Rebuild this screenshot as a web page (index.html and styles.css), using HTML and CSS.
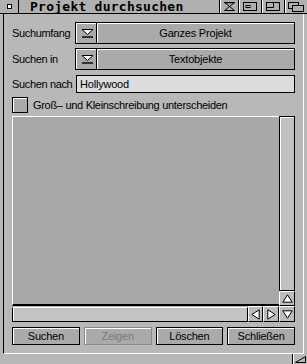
FILE: index.html
```html
<!DOCTYPE html>
<html>
<head>
<meta charset="utf-8">
<link rel="stylesheet" href="styles.css">
</head>
<body>
<div class="window">
  <div class="titlebar">
    <div class="tgad close"><span class="closebox"></span></div>
    <div class="title">Projekt durchsuchen</div>
    <div class="tgad g1"><svg width="11" height="9" viewBox="0 0 11 9"><path d="M0.5 0.5H10.5L5.5 4.5L10.5 8.5H0.5L5.5 4.5Z" fill="none" stroke="#000"/><path d="M0.5 0.5H10.5" stroke="#000" stroke-width="1.6"/></svg></div>
    <div class="tgad g2"><svg width="14" height="9" viewBox="0 0 14 9"><rect x="0.5" y="0.5" width="13" height="8" fill="none" stroke="#000"/><rect x="3" y="3.5" width="4" height="2" fill="none" stroke="#000"/></svg></div>
    <div class="tgad g3"><svg width="14" height="9" viewBox="0 0 14 9"><rect x="0.5" y="0.5" width="13" height="8" fill="none" stroke="#000"/><path d="M0.5 5.5H7.5V0.5" fill="none" stroke="#000"/></svg></div>
    <div class="tgad g4"><svg width="16" height="10" viewBox="0 0 16 10"><rect x="0.5" y="0.5" width="10" height="6" fill="#b0b0b0" stroke="#000"/><rect x="4.5" y="3.5" width="11" height="6" fill="#b0b0b0" stroke="#000"/></svg></div>
  </div>
  <div class="frame">
    <div class="row r1">
      <span class="label">Suchumfang</span>
      <div class="cycle"><span class="cyc-icon"><svg width="13" height="10" viewBox="0 0 13 10"><path d="M1 1.5H12L6.5 6.5Z" fill="#fff" stroke="#000"/><path d="M1 9H12" stroke="#000" stroke-width="1.4"/></svg></span><span class="cyc-text">Ganzes Projekt</span></div>
    </div>
    <div class="row r2">
      <span class="label">Suchen in</span>
      <div class="cycle"><span class="cyc-icon"><svg width="13" height="10" viewBox="0 0 13 10"><path d="M1 1.5H12L6.5 6.5Z" fill="#fff" stroke="#000"/><path d="M1 9H12" stroke="#000" stroke-width="1.4"/></svg></span><span class="cyc-text">Textobjekte</span></div>
    </div>
    <div class="row r3">
      <span class="label">Suchen nach</span>
      <div class="string">Hollywood</div>
    </div>
    <div class="row r4">
      <span class="checkbox"></span>
      <span class="cblabel">Groß– und Kleinschreibung unterscheiden</span>
    </div>
    <div class="listgrid">
      <div class="list"></div>
      <div class="vscroll"></div>
      <div class="arrow up"><svg width="11" height="9" viewBox="0 0 11 9"><path d="M5.5 0.8L10.2 8.2H0.8Z" fill="#fff" stroke="#000"/></svg></div>
      <div class="hrow">
        <div class="hscroll"></div>
        <div class="arrow lr"><svg width="9" height="11" viewBox="0 0 9 11"><path d="M0.8 5.5L8.2 0.8V10.2Z" fill="#fff" stroke="#000"/></svg></div>
        <div class="arrow lr"><svg width="9" height="11" viewBox="0 0 9 11"><path d="M8.2 5.5L0.8 0.8V10.2Z" fill="#fff" stroke="#000"/></svg></div>
      </div>
      <div class="arrow down"><svg width="11" height="9" viewBox="0 0 11 9"><path d="M5.5 8.2L10.2 0.8H0.8Z" fill="#fff" stroke="#000"/></svg></div>
    </div>
    <div class="buttons">
      <div class="btn">Suchen</div>
      <div class="btn disabled">Zeigen</div>
      <div class="btn">Löschen</div>
      <div class="btn">Schließen</div>
    </div>
  </div>
  <div class="bottombar">
    <div class="sizegad"><svg width="11" height="7" viewBox="0 0 11 7"><path d="M0.5 6.5L10.5 0.5V6.5Z" fill="none" stroke="#000"/></svg></div>
  </div>
</div>
</body>
</html>
```
FILE: styles.css
```css
* { box-sizing: border-box; }
body {
  margin: 0;
  background: #b8b8b8;
  font-family: "Liberation Sans", Arial, sans-serif;
  font-size: 11px;
  color: #000;
}
.window {
  width: 307px;
  height: 364px;
  display: flex;
  flex-direction: column;
  background: #b8b8b8;
  overflow: hidden;
}
.titlebar {
  height: 14px;
  flex: none;
  display: flex;
  border-bottom: 1px solid #000;
  background: #b0b0b0;
}
.tgad {
  height: 13px;
  display: flex;
  align-items: center;
  justify-content: center;
  border-left: 1px solid #000;
  box-shadow: inset 1px 0 #fff;
}
.close {
  width: 19px;
  border-left: 0;
  border-right: 1px solid #000;
  box-shadow: none;
}
.closebox {
  width: 5px;
  height: 5px;
  border: 1px solid #000;
  background: #fff;
}
.title {
  flex: 1;
  padding-left: 11px;
  font-family: "DejaVu Sans Mono", "Liberation Mono", monospace;
  font-weight: bold;
  font-size: 13px;
  line-height: 13px;
  letter-spacing: 0.25px;
  white-space: nowrap;
}
.g1 { width: 19px; }
.g2, .g3, .g4 { width: 23px; }

.frame {
  flex: 1;
  display: flex;
  flex-direction: column;
  margin: 0 3px;
  border-left: 1px solid #000;
  border-right: 1px solid #fff;
  border-bottom: 1px solid #fff;
  padding: 8px 8px 8px 8px;
}
.row {
  display: flex;
  align-items: center;
  flex: none;
}
.r1 { height: 22px; margin-bottom: 4px; }
.r2 { height: 22px; margin-bottom: 5px; }
.r3 { height: 18px; margin-bottom: 4px; }
.r4 { height: 16px; margin-bottom: 3px; }
.label {
  width: 63px;
  letter-spacing: -0.35px;
  white-space: nowrap;
}
.cycle {
  flex: 1;
  height: 100%;
  display: flex;
  align-items: center;
  background: #aaaaaa;
  border: 1px solid #000;
  box-shadow: inset 1px 1px 0 #fff;
}
.cyc-icon {
  width: 21px;
  height: 100%;
  display: flex;
  align-items: center;
  justify-content: center;
  padding-left: 2px;
  border-right: 1px solid #000;
  box-shadow: 1px 0 0 #fff;
}
.cyc-text {
  flex: 1;
  text-align: center;
  letter-spacing: -0.2px;
}
.string {
  flex: 1;
  height: 100%;
  margin-left: 1px;
  background: #dcdcdc;
  border: 1px solid #000;
  padding-left: 3px;
  line-height: 16px;
  letter-spacing: -0.2px;
}
.checkbox {
  width: 16px;
  height: 16px;
  background: #aaaaaa;
  border: 1px solid #000;
  box-shadow: inset 1px 1px 0 #fff;
}
.cblabel {
  margin-left: 5px;
  letter-spacing: -0.3px;
  white-space: nowrap;
}
.listgrid {
  flex: 1;
  display: grid;
  grid-template-columns: 1fr 16px;
  grid-template-rows: 1fr 15px 16px;
}
.list {
  grid-column: 1;
  grid-row: 1 / 3;
  background: #a8a8a8;
  border-top: 1px solid #fff;
  border-left: 1px solid #fff;
  border-bottom: 2px solid #000;
}
.vscroll {
  grid-column: 2;
  grid-row: 1;
  background: #c0c0c0;
  border: 1px solid #000;
  box-shadow: inset 1px 1px 0 #fff;
}
.arrow {
  display: flex;
  align-items: center;
  justify-content: center;
  background: #bcbcbc;
  border-top: 1px solid #fff;
  border-left: 1px solid #fff;
  border-right: 1px solid #000;
  border-bottom: 1px solid #000;
}
.up { grid-column: 2; grid-row: 2; }
.down { grid-column: 2; grid-row: 3; }
.hrow {
  grid-column: 1;
  grid-row: 3;
  display: flex;
}
.hscroll {
  flex: 1;
  margin-top: 1px;
  background: #c4c4c4;
  border-top: 1px solid #fff;
  border-left: 1px solid #000;
  border-bottom: 1px solid #000;
  border-right: 1px solid #000;
  box-shadow: inset 1px 0 0 #fff;
}
.lr { width: 15px; }
.lr:last-child { width: 16px; }
.buttons {
  flex: none;
  height: 18px;
  margin-top: 5px;
  display: flex;
  gap: 4px;
}
.btn {
  flex: 1;
  display: flex;
  align-items: center;
  justify-content: center;
  background: #aaaaaa;
  border: 1px solid #000;
  box-shadow: inset 1px 1px 0 #fff;
  letter-spacing: -0.2px;
}
.btn.disabled {
  color: #7a7a7a;
  border-color: #8a8a8a;
}
.bottombar {
  height: 10px;
  flex: none;
  display: flex;
  justify-content: flex-end;
}
.sizegad {
  width: 15px;
  height: 10px;
  display: flex;
  align-items: center;
  justify-content: center;
  border-left: 1px solid #000;
  box-shadow: inset 1px 0 0 #fff;
}
```
